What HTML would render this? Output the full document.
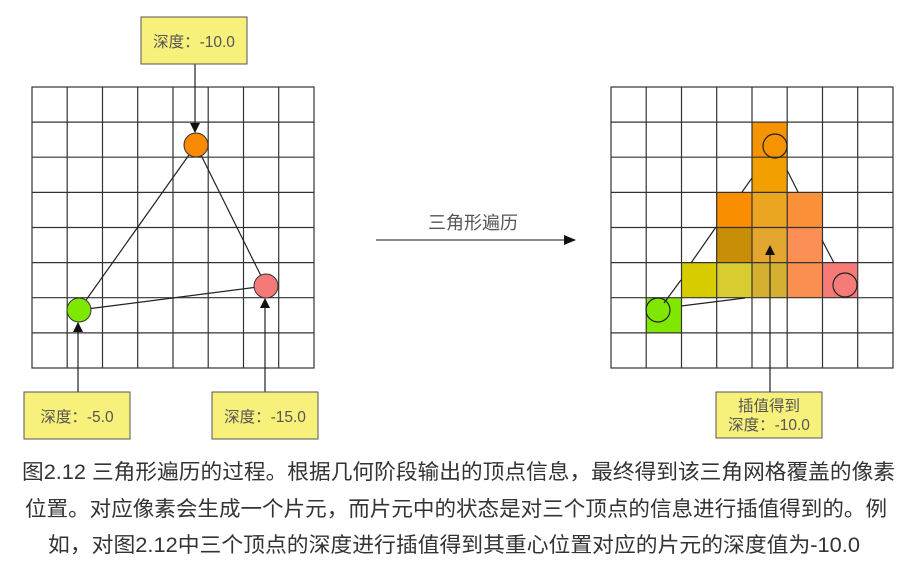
<!DOCTYPE html>
<html><head><meta charset="utf-8"><style>
html,body{margin:0;padding:0;background:#fff;width:914px;height:574px;overflow:hidden}
svg{display:block}
text{font-family:"Liberation Sans","Noto Sans CJK SC",sans-serif}
</style></head><body>
<svg width="914" height="574" viewBox="0 0 914 574" xmlns="http://www.w3.org/2000/svg">
<defs>
<marker id="ah" markerWidth="10" markerHeight="10" refX="9" refY="5" orient="auto" markerUnits="userSpaceOnUse"><path d="M0,0 L10,5 L0,10 z" fill="#111"/></marker>
<marker id="ah2" markerWidth="12" markerHeight="10" refX="11" refY="5" orient="auto" markerUnits="userSpaceOnUse"><path d="M0,0 L12,5 L0,10 z" fill="#111"/></marker>
</defs>
<g stroke="#333" stroke-width="1.2" fill="none">
<rect x="32" y="87" width="282" height="281"/>
<path d="M67.2 87V368M102.5 87V368M137.7 87V368M173 87V368M208.2 87V368M243.5 87V368M278.7 87V368
M32 122.1H314M32 157.2H314M32 192.4H314M32 227.5H314M32 262.6H314M32 297.7H314M32 332.9H314"/>
</g>
<g stroke="#222" stroke-width="1.2">
<line x1="196" y1="145" x2="79" y2="310"/>
<line x1="196" y1="145" x2="266" y2="286"/>
<line x1="79" y1="310" x2="266" y2="286"/>
</g>
<circle cx="196" cy="145" r="12" fill="#f98a00" stroke="#333"/>
<circle cx="79" cy="310" r="12" fill="#7fe800" stroke="#333"/>
<circle cx="266" cy="286" r="12" fill="#f47a7a" stroke="#333"/>
<g stroke="#222" stroke-width="1.2">
<line x1="195" y1="64" x2="195" y2="132" marker-end="url(#ah)"/>
<line x1="78" y1="392" x2="78" y2="323" marker-end="url(#ah)"/>
<line x1="265" y1="392" x2="265" y2="299" marker-end="url(#ah)"/>
</g>
<g fill="#f7f07a" stroke="#555" stroke-width="1">
<rect x="141" y="17" width="106" height="47"/>
<rect x="24" y="392" width="106" height="47"/>
<rect x="212" y="392" width="106" height="47"/>
<rect x="716" y="392" width="106" height="46"/>
</g>
<g fill="#555" font-size="15.5">
<text x="194" y="47" text-anchor="middle">深度：-10.0</text>
<text x="77" y="422" text-anchor="middle">深度：-5.0</text>
<text x="265" y="422" text-anchor="middle">深度：-15.0</text>
<text x="769" y="411" text-anchor="middle">插值得到</text>
<text x="769" y="430" text-anchor="middle">深度：-10.0</text>
</g>
<text x="473" y="229" text-anchor="middle" font-size="18" fill="#555">三角形遍历</text>
<line x1="376" y1="240" x2="575" y2="240" stroke="#444" stroke-width="1.2" marker-end="url(#ah2)"/>
<g>
<rect x="752" y="122" width="35" height="35" fill="#f59400"/>
<rect x="752" y="157" width="35" height="35" fill="#f2a000"/>
<rect x="716" y="192" width="36" height="35" fill="#f88e00"/>
<rect x="752" y="192" width="35" height="35" fill="#eba520"/>
<rect x="787" y="192" width="35" height="35" fill="#fa9038"/>
<rect x="716" y="227" width="36" height="36" fill="#c88e08"/>
<rect x="752" y="227" width="35" height="36" fill="#e3a62e"/>
<rect x="787" y="227" width="35" height="36" fill="#fb8f55"/>
<rect x="681" y="263" width="35" height="35" fill="#d6cc00"/>
<rect x="716" y="263" width="36" height="35" fill="#d8cc30"/>
<rect x="752" y="263" width="35" height="35" fill="#d5b030"/>
<rect x="787" y="263" width="35" height="35" fill="#fb8f50"/>
<rect x="822" y="263" width="35" height="35" fill="#f67a78"/>
<rect x="646" y="298" width="35" height="35" fill="#80e800"/>
</g>
<g stroke="#333" stroke-width="1.2" fill="none">
<rect x="611" y="87" width="282" height="281"/>
<path d="M646.2 87V368M681.5 87V368M716.7 87V368M752 87V368M787.2 87V368M822.5 87V368M857.7 87V368
M611 122.1H893M611 157.2H893M611 192.4H893M611 227.5H893M611 262.6H893M611 297.7H893M611 332.9H893"/>
</g>
<g stroke="#222" stroke-width="1.2">
<line x1="752" y1="178" x2="742" y2="192"/>
<line x1="787" y1="170" x2="798" y2="192"/>
<line x1="716" y1="227" x2="691" y2="263"/>
<line x1="681" y1="280" x2="664" y2="303"/>
<line x1="822" y1="240" x2="834" y2="263"/>
<line x1="681" y1="306" x2="745" y2="298"/>
<line x1="770" y1="392" x2="770" y2="246" marker-end="url(#ah)"/>
</g>
<g fill="none" stroke="#222" stroke-width="1.2">
<circle cx="775" cy="146" r="12"/>
<circle cx="845" cy="285" r="12"/>
<circle cx="658" cy="310" r="12"/>
</g>
<g fill="#333" font-size="21">
<text x="22" y="479" textLength="873" lengthAdjust="spacingAndGlyphs">图2.12 三角形遍历的过程。根据几何阶段输出的顶点信息，最终得到该三角网格覆盖的像素</text>
<text x="25" y="516" textLength="862" lengthAdjust="spacingAndGlyphs">位置。对应像素会生成一个片元，而片元中的状态是对三个顶点的信息进行插值得到的。例</text>
<text x="48" y="552" textLength="812" lengthAdjust="spacingAndGlyphs">如，对图2.12中三个顶点的深度进行插值得到其重心位置对应的片元的深度值为-10.0</text>
</g>
</svg>
</body></html>
